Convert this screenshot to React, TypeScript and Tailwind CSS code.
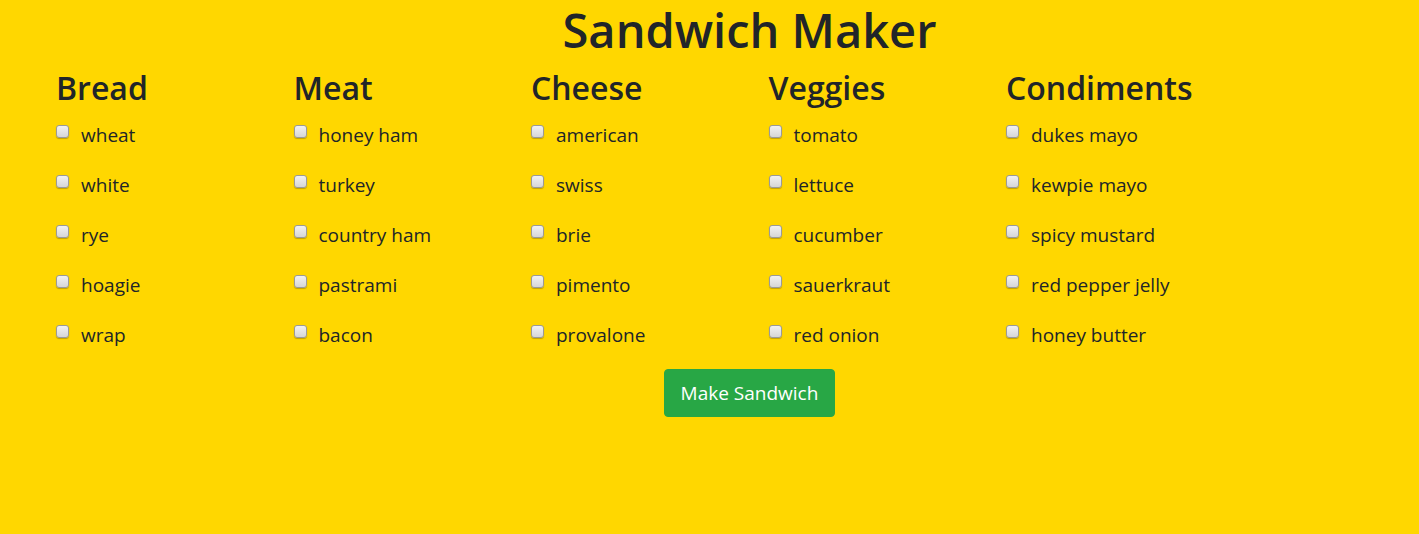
import React from 'react';

const groups = [
  { title: 'Bread', items: ['wheat', 'white', 'rye', 'hoagie', 'wrap'] },
  { title: 'Meat', items: ['honey ham', 'turkey', 'country ham', 'pastrami', 'bacon'] },
  { title: 'Cheese', items: ['american', 'swiss', 'brie', 'pimento', 'provalone'] },
  { title: 'Veggies', items: ['tomato', 'lettuce', 'cucumber', 'sauerkraut', 'red onion'] },
  { title: 'Condiments', items: ['dukes mayo', 'kewpie mayo', 'spicy mustard', 'red pepper jelly', 'honey butter'] },
];

const Box: React.FC = () => (
  <span className="inline-block w-[13px] h-[13px] rounded-[3px] border border-[#9a9a9a] bg-gradient-to-b from-[#f2f2f2] to-[#d6d6d6] shadow-[0_1px_1px_rgba(0,0,0,0.25)]" />
);

const App: React.FC = () => {
  return (
    <div className="min-h-screen bg-[#ffd700] text-[#212529] font-['Open_Sans',sans-serif] overflow-hidden">
      <h1 className="pl-[80px] text-center text-[47px] leading-[60px] font-semibold">Sandwich Maker</h1>
      <div className="flex pl-[56px] mt-[8px]">
        {groups.map((g) => (
          <div key={g.title} className="w-[237.5px] shrink-0">
            <h2 className="text-[32px] leading-[40px] font-semibold mb-[15px]">{g.title}</h2>
            <ul className="flex flex-col gap-[26px]">
              {g.items.map((item) => (
                <li key={item} className="h-[24px] flex items-start">
                  <span className="mt-[2px] mr-[12px] flex"><Box /></span>
                  <span className="text-[19px] leading-[24px]">{item}</span>
                </li>
              ))}
            </ul>
          </div>
        ))}
      </div>
      <div className="flex justify-center pl-[80px] mt-[22px]">
        <button className="bg-[#28a745] text-white text-[19px] leading-[30px] px-4 py-2 rounded border border-[#28a745]">
          Make Sandwich
        </button>
      </div>
    </div>
  );
};

export default App;
